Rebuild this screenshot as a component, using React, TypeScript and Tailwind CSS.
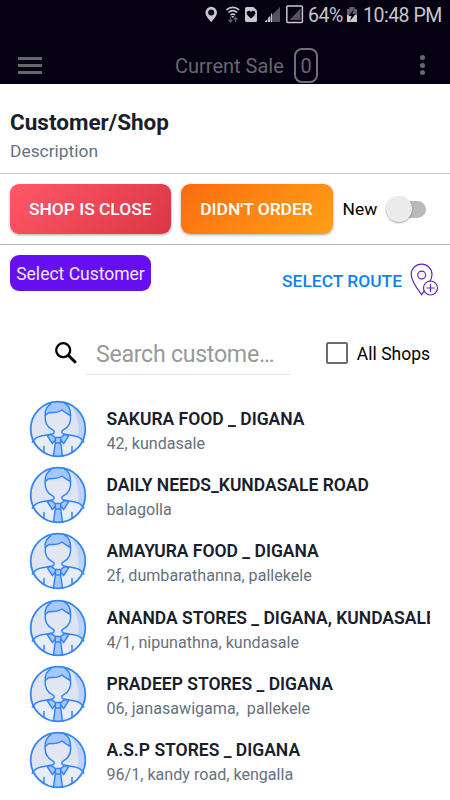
import React, { useState } from 'react';

interface Customer {
  id: number;
  name: string;
  address: string;
}

const customers: Customer[] = [
  { id: 1, name: 'SAKURA FOOD _ DIGANA', address: '42, kundasale' },
  { id: 2, name: 'DAILY NEEDS_KUNDASALE ROAD', address: 'balagolla' },
  { id: 3, name: 'AMAYURA FOOD _ DIGANA', address: '2f, dumbarathanna, pallekele' },
  { id: 4, name: 'ANANDA STORES _ DIGANA, KUNDASALE', address: '4/1, nipunathna, kundasale' },
  { id: 5, name: 'PRADEEP STORES _ DIGANA', address: '06, janasawigama,  pallekele' },
  { id: 6, name: 'A.S.P STORES _ DIGANA', address: '96/1, kandy road, kengalla' },
];

const StatusIcons: React.FC = () => (
  <svg width="100" height="30" viewBox="205 0 100 30" className="shrink-0">
    {/* Location */}
    <path fill="#c9c7cd" fillRule="evenodd" d="M211.2 6.8a5.8 5.8 0 0 0-5.8 5.8c0 4 5.8 9.6 5.8 9.6s5.8-5.6 5.8-9.6a5.8 5.8 0 0 0-5.8-5.8Zm0 2.7a3 3 0 1 1 0 6 3 3 0 0 1 0-6Z" />
    {/* Wifi with traffic arrows */}
    <g fill="none" stroke="#c9c7cd" strokeWidth="1.6">
      <path d="M226.4 9.8c3.8-3.2 9-3.2 12.8 0" />
      <path d="M228.4 12.5c2.8-2.3 6-2.3 8.8 0" />
      <path d="M230.5 15c1.5-1.2 3.1-1.2 4.6 0" />
    </g>
    <path fill="#c9c7cd" d="m232.8 18-1.6-2h3.2Z" />
    <path fill="none" stroke="#62606c" strokeWidth="1.2" d="M230.5 17.5v4.5m-1.8-2 1.8 2 1.8-2M235.5 22v-4.5m-1.8 2 1.8-2 1.8 2" />
    {/* Health card */}
    <path fill="#c9c7cd" d="M246.5 7h7l3.5 3.5v10a1.5 1.5 0 0 1-1.5 1.5h-9a1.5 1.5 0 0 1-1.5-1.5v-12A1.5 1.5 0 0 1 246.5 7Z" />
    <path fill="#050012" d="M251 18.4c-2.7-2-4.4-3.5-4.4-5.3 0-2.6 3.2-3.2 4.4-1.1 1.2-2.1 4.4-1.5 4.4 1.1 0 1.8-1.7 3.3-4.4 5.3Z" />
    {/* Signal strength */}
    <path fill="#55515f" d="M265 22 280 7v15Z" />
    <path fill="#c9c7cd" d="M265 22v-1l2-1v2Zm3 0v-4l2-2v6Zm3 0v-8l1-1v9Z" />
    <rect x="286.8" y="6" width="15.6" height="16.4" rx="1" fill="none" stroke="#c9c7cd" strokeWidth="1.5" />
    <path fill="#55515f" d="M289.5 20 300.5 8.5V20Z" />
  </svg>
);

const Avatar: React.FC = () => (
  <svg width="58" height="58" viewBox="0 0 58 58" className="shrink-0">
    <circle cx="29" cy="29" r="27.3" fill="#dfe4f2" />
    <path fill="#bcd2fa" d="M42 5.5c18 11 18 36 0 47 10-14 10-33 0-47Z" />
    {/* Shirt */}
    <path fill="#e8ecf6" d="M22 34.3 12 36c-4.5 1-7 3-8.8 6.200C8 51 17.5 56.3 29 56.3S50 51 54.8 42.200C53 39 50.5 37 46 36l-10-1.700-7 4Z" />
    {/* Head and neck */}
    <path fill="#e3e7f3" d="M16.3 15c-1 7.5 2 12 7 14.7 2.5 1.4 2.5 3 .2 4.6l5.5 4 5.5-4c-2.3-1.6-2.3-3.2.2-4.6 5-2.7 8-7.2 7-14.7Z" />
    {/* Hair */}
    <path fill="#a6c7fb" d="M16.3 15.5c-.6-5.5 1.2-9 5.7-11.8 6-2.3 10-2 13.5-.7 4 2 6.2 6.5 6 12.5-2.5-1.5-5.5-3-8.5-5.5-4.5 3.5-9.5 2-13.5 2.8Z" />
    {/* Collar and tie */}
    <path fill="#a6c7fb" d="m22 34.3 5 3.7-3.5 5.7-5.3-7.7Zm14 0-5 3.7 3.5 5.7 5.3-7.7Z" />
    <path fill="#a6c7fb" d="M26.3 37.5h5.4v5.5l1.8 13.2h-9L26.3 43Z" />
    <g fill="none" stroke="#3285f7" strokeWidth="1.5" strokeLinejoin="round" strokeLinecap="round">
      <path d="M16.3 15.5c-.6-5.5 1.2-9 5.7-11.8M41.5 15.5c.2-6-2-10.5-6-12.5M16.3 15.5l3.2-2.7c4-.8 9 .7 13.5-2.8 3 2.5 6 4 8.5 5.5" />
      <path d="M16.3 15.5c-.8 7 2 11.5 7 14.2 2.5 1.4 2.5 3 .2 4.3l-1.5.3L12 36c-4.5 1-7 3-8.8 6.2M41.5 15.5c.8 7-1.8 11.5-6.8 14.2-2.5 1.4-2.5 3-.2 4.3l1.500.3L46 36c4.5 1 7 3 8.8 6.2" />
      <path d="m22 34.3-3.6 1.5 5 7.8 2.9-4M36 34.3l3.6 1.5-5 7.8-2.9-4M22 34.3l4.3 3.2h5.4l4.3-3.200M26.3 37.5v5.5h5.4v-5.5M26.3 43l-1.8 13M31.7 43l1.8 13M15 46.5v5M43 46.5v5" />
      <circle cx="29" cy="29" r="27.3" strokeWidth="1.8" />
    </g>
  </svg>
);

const CustomerRow: React.FC<{ customer: Customer }> = ({ customer }) => (
  <li className="flex h-[66.2px] items-center">
    <Avatar />
    <div className="ml-[19.5px] min-w-0 flex-1 overflow-hidden pt-[4px] whitespace-pre">
      <p className="text-[17.5px] leading-[25px] font-semibold text-[#17202b]">{customer.name}</p>
      <p className="text-[16.1px] leading-[23px] text-[#65717e]">{customer.address}</p>
    </div>
  </li>
);

export default function App() {
  const [isNew, setIsNew] = useState(false);
  const [allShops, setAllShops] = useState(false);
  const [search, setSearch] = useState('');

  return (
    <div className="h-[800px] w-[450px] overflow-hidden bg-white font-['Roboto','Liberation_Sans',sans-serif]">
      <header className="h-[84px] bg-[#050012]">
        <div className="flex h-[30px] items-center justify-end pr-[8px] text-[19.5px] text-[#c9c7cd]">
          <StatusIcons />
          <span className="ml-[3px] w-[38px] pt-[1px] tracking-[-0.4px]">64%</span>
          <svg width="12" height="30" viewBox="346 0 12 30" className="mr-[5px] shrink-0">
            <path fill="#62606c" d="M349.5 7h5v2h-5ZM347 9h10v6h-10Z" />
            <path fill="#c9c7cd" d="M347 15h10v7h-10Z" />
            <path fill="#050012" d="m354 9-5.5 7h3l-1.5 5 5.5-7h-3Z" />
          </svg>
          <span className="w-[79px] pt-[1px] whitespace-nowrap tracking-[-0.5px]">10:48 PM</span>
        </div>
        <div className="flex h-[54px] items-center pt-[16px] pr-[25px] pl-[18px]">
          <button aria-label="Menu" className="flex w-[24px] flex-col gap-[4px]">
            <span className="h-[3px] bg-[#69666d]" />
            <span className="h-[3px] bg-[#69666d]" />
            <span className="h-[3px] bg-[#69666d]" />
          </button>
          <h1 className="ml-[133px] w-[110px] pt-[2px] whitespace-nowrap text-[20px] leading-[24px] text-[#69666d]">Current Sale</h1>
          <span className="ml-[9px] flex h-[35px] w-[24px] items-center justify-center rounded-[8px] border-2 border-[#726f76] pt-[1px] text-[20px] text-[#69666d]">0</span>
          <button aria-label="More" className="ml-auto flex flex-col gap-[2.5px]">
            <span className="size-[5px] rounded-full bg-[#69666d]" />
            <span className="size-[5px] rounded-full bg-[#69666d]" />
            <span className="size-[5px] rounded-full bg-[#69666d]" />
          </button>
        </div>
      </header>

      <section className="h-[90px] border-b border-[#c8c8c8] px-[10px] pt-[23px]">
        <h2 className="text-[22.5px] leading-[30px] font-bold text-[#17202b]">Customer/Shop</h2>
        <p className="mt-[2px] text-[17.4px] leading-[25px] text-[#65717e]">Description</p>
      </section>

      <section className="flex h-[71px] items-center border-b border-[#b5b5b5] px-[10px]">
        <button className="h-[50px] w-[160.5px] rounded-[9px] bg-linear-135 from-[#ff5768] to-[#dc3545] text-[17.4px] font-medium text-white shadow-[0_1px_3px_rgba(0,0,0,0.35)]">
          SHOP IS CLOSE
        </button>
        <button className="ml-[10px] h-[50px] w-[152px] rounded-[9px] bg-linear-135 from-[#fb6b10] to-[#ff9f15] text-[17.4px] font-medium text-white shadow-[0_1px_3px_rgba(0,0,0,0.35)]">
          DIDN'T ORDER
        </button>
        <span className="ml-[10px] w-[43px] pt-[1px] text-[17.4px] text-black">New</span>
        <button
          role="switch"
          aria-checked={isNew}
          aria-label="New"
          onClick={() => setIsNew(!isNew)}
          className="flex h-[17px] w-[40.5px] items-center rounded-full bg-[#b9b9b9]"
        >
          <span className={`size-[26px] rounded-full bg-[#ececec] shadow-[0_1px_2px_rgba(0,0,0,0.35)] ${isNew ? 'ml-auto' : ''}`} />
        </button>
      </section>

      <section className="flex h-[67px] items-start px-[10px] pt-[10px]">
        <span className="flex h-[36px] w-[141px] items-center justify-center rounded-[9px] bg-[#6610f2] pt-[3px] text-[17.5px] whitespace-nowrap text-[#eee7fc]">
          Select Customer
        </span>
        <button className="ml-auto flex items-center pt-[8px]">
          <span className="pt-[3px] text-[17.4px] font-medium text-[#0d83ee]">SELECT ROUTE</span>
          <svg width="30" height="34" viewBox="0 0 30 34" className="ml-[8px]" fill="none" stroke="#6426b8" strokeWidth="1.2">
            <path d="M19.8 18.7c1.3-2.4 2.2-4.9 2.2-7.2a10.4 10.4 0 0 0-20.8 0c0 6.5 6.1 14.5 10.4 20.2l2.8-4" />
            <circle cx="11.7" cy="12" r="3.9" />
            <circle cx="20.5" cy="25" r="7" />
            <path d="M20.5 21v8M16.5 25h8" />
          </svg>
        </button>
      </section>

      <section className="flex h-[84px] items-center pr-[20px] pb-[2px] pl-[54px]">
        <svg width="24" height="24" viewBox="0 0 24 24" fill="none" stroke="#000" className="shrink-0">
          <circle cx="9.2" cy="9.2" r="7" strokeWidth="2.3" />
          <path d="m14.3 14.3 7.5 7.5" strokeWidth="3" />
        </svg>
        <input
          value={search}
          onChange={(e) => setSearch(e.target.value)}
          placeholder="Search custome…"
          className="ml-[8px] h-[44px] w-[205px] border-b border-[#e5e5e5] pt-[2px] pl-[10px] text-[23.2px] tracking-[-0.3px] text-black outline-none placeholder:text-[#999]"
        />
        <button
          role="checkbox"
          aria-checked={allShops}
          aria-label="All Shops"
          onClick={() => setAllShops(!allShops)}
          className={`ml-[35px] size-[22px] shrink-0 rounded-[2px] border-2 border-[#6d6d6d] ${allShops ? 'bg-[#6610f2]' : 'bg-white'}`}
        />
        <span className="ml-auto pt-[2px] whitespace-nowrap text-[17.5px] text-black">All Shops</span>
      </section>

      <ul className="pr-[20px] pl-[29px]">
        {customers.map((customer) => (
          <CustomerRow key={customer.id} customer={customer} />
        ))}
      </ul>
    </div>
  );
}
